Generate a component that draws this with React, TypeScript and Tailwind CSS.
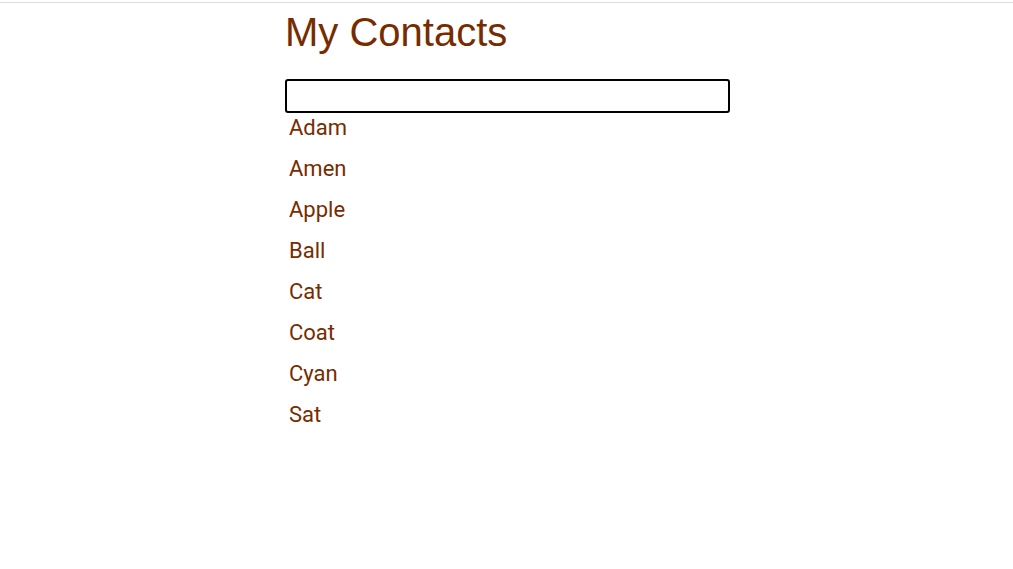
import React, { useState } from 'react';

const contacts = ['Adam', 'Amen', 'Apple', 'Ball', 'Cat', 'Coat', 'Cyan', 'Sat'];

const App = () => {
  const [query, setQuery] = useState('');

  const filtered = contacts.filter((c) => c.toLowerCase().includes(query.toLowerCase()));

  return (
    <div className="min-h-screen bg-white pt-[2px]">
      <div className="border-t border-[#dcdcdc]">
        <div className="mx-auto w-[447px] pl-[2px] pt-[6px]">
          <h1 className="text-[40px] leading-[46px] text-[#772c00] font-['Liberation_Sans',Arial,sans-serif]">
            My Contacts
          </h1>
          <input
            type="text"
            value={query}
            onChange={(e) => setQuery(e.target.value)}
            className="mt-[24px] block h-[34px] w-[445px] rounded-[3px] border-2 border-black bg-white px-2 outline-none"
          />
          <ul className="font-['Roboto',sans-serif] text-[22px] text-[#772c00]">
            {filtered.map((c) => (
              <li key={c} className="mb-[11px] pl-[4px] leading-[30px]">
                {c}
              </li>
            ))}
          </ul>
        </div>
      </div>
    </div>
  );
};

export default App;
